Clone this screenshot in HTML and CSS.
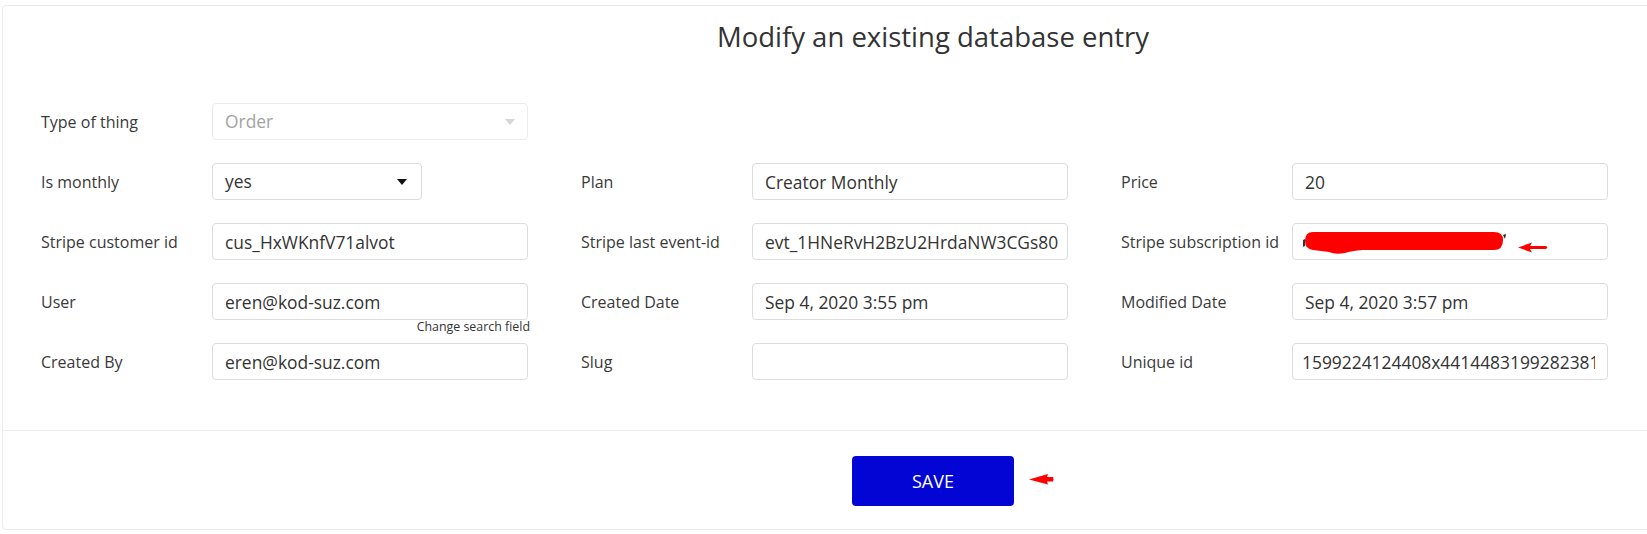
FILE: index.html
```html
<!DOCTYPE html>
<html lang="en">
<head>
  <meta charset="UTF-8">
  <title>Modify an existing database entry</title>
  <link rel="stylesheet" href="styles.css">
</head>
<body>
  <!-- Modal: edit a thing in the database -->
  <div class="modal">
    <div class="modal-head">
      <h1 class="modal-title">Modify an existing database entry</h1>
    </div>

    <div class="modal-body">
      <div class="form-row">
        <div class="field">
          <label class="field-label">Type of thing</label>
          <div class="select select-disabled">Order<span class="caret"></span></div>
        </div>
      </div>

      <div class="form-row">
        <div class="field">
          <label class="field-label">Is monthly</label>
          <div class="select select-small">yes<span class="caret"></span></div>
        </div>
        <div class="field">
          <label class="field-label">Plan</label>
          <input class="text-input" type="text" value="Creator Monthly">
        </div>
        <div class="field">
          <label class="field-label">Price</label>
          <input class="text-input" type="text" value="20">
        </div>
      </div>

      <div class="form-row">
        <div class="field">
          <label class="field-label">Stripe customer id</label>
          <input class="text-input" type="text" value="cus_HxWKnfV71alvot">
        </div>
        <div class="field">
          <label class="field-label">Stripe last event-id</label>
          <input class="text-input input-tight" type="text" value="evt_1HNeRvH2BzU2HrdaNW3CGs80">
        </div>
        <div class="field">
          <label class="field-label">Stripe subscription id</label>
          <div class="input-wrap">
            <input class="text-input" type="text" value="">
            <!-- redacted value + pointer drawn over the screenshot -->
            <svg class="scribble" width="206" height="24" viewBox="0 0 206 24">
              <path d="M2 9 L4 8 L4 15 L2 16 Z" fill="#333"/>
              <path d="M202 4 L205 3 L204 8 Z" fill="#222"/>
              <path d="M12 1 H193 Q202 1 202 9 Q202 19 193 19 H62 Q50 20 44 22 Q34 24 28 21 Q20 20 12 19 Q4 18 4 10 Q4 1 12 1 Z" fill="#ff0000"/>
            </svg>
            <svg class="pointer pointer-sub" width="30" height="11" viewBox="0 0 30 11">
              <polygon points="0,5.5 14,0.5 12,4 28,4 29.5,5.5 28,7 12,7 14,10.5" fill="#ff0000"/>
            </svg>
          </div>
        </div>
      </div>

      <div class="form-row">
        <div class="field">
          <label class="field-label">User</label>
          <div class="input-wrap">
            <input class="text-input" type="text" value="eren@kod-suz.com">
            <span class="search-link">Change search field</span>
          </div>
        </div>
        <div class="field">
          <label class="field-label">Created Date</label>
          <input class="text-input" type="text" value="Sep 4, 2020 3:55 pm">
        </div>
        <div class="field">
          <label class="field-label">Modified Date</label>
          <input class="text-input" type="text" value="Sep 4, 2020 3:57 pm">
        </div>
      </div>

      <div class="form-row">
        <div class="field">
          <label class="field-label">Created By</label>
          <input class="text-input" type="text" value="eren@kod-suz.com">
        </div>
        <div class="field">
          <label class="field-label">Slug</label>
          <input class="text-input" type="text" value="">
        </div>
        <div class="field">
          <label class="field-label">Unique id</label>
          <input class="text-input input-scrolled" type="text" value="1599224124408x441448319928238128">
        </div>
      </div>
    </div>

    <div class="modal-foot">
      <div class="save-wrap">
        <button class="save-btn" type="button">SAVE</button>
        <svg class="pointer pointer-save" width="25" height="12" viewBox="0 0 25 12">
          <polygon points="0,6.5 19,1 18,4 24,4 24.5,6 24,8.5 18,8.5 19,11.5" fill="#ff0000"/>
        </svg>
      </div>
    </div>
  </div>
</body>
</html>
```

FILE: styles.css
```css
* {
  box-sizing: border-box;
}

body {
  margin: 0;
  width: 1647px;
  height: 534px;
  overflow: hidden;
  background: #fff;
  color: #333;
  font-family: "Open Sans", "Liberation Sans", sans-serif;
}

/* Modal box, wider than the window */
.modal {
  width: 1862px;
  margin: 5px 0 0 2px;
  border: 1px solid #ececec;
  border-radius: 4px;
  background: #fff;
}

.modal-head {
  padding-top: 12px;
  text-align: center;
}

.modal-title {
  margin: 0;
  font-size: 27.5px;
  font-weight: 400;
  line-height: 38px;
  color: #333;
}

.modal-body {
  padding: 47px 0 50px 38px;
}

/* Rows of three label/input pairs */
.form-row {
  display: grid;
  grid-template-columns: repeat(3, 540px);
  height: 37px;
  margin-bottom: 23px;
}

.form-row:last-child {
  margin-bottom: 0;
}

.field {
  display: flex;
  align-items: center;
}

.field-label {
  width: 171px;
  flex-shrink: 0;
  font-size: 16px;
  color: #3a3a3a;
}

.text-input,
.select {
  width: 316px;
  height: 37px;
  padding: 0 12px;
  border: 1px solid #dcdcdc;
  border-radius: 4px;
  background: #fff;
  font-family: inherit;
  font-size: 17.4px;
  line-height: 35px;
  color: #333;
  outline: none;
}

.input-scrolled {
  padding-left: 9px;
}

.input-tight {
  padding-right: 2px;
}

.input-wrap {
  position: relative;
  width: 316px;
  height: 37px;
}

/* Dropdowns */
.select {
  position: relative;
  white-space: nowrap;
}

.select-small {
  width: 210px;
}

.select-disabled {
  border-color: #ebebeb;
  color: #a3a3a3;
}

.caret {
  position: absolute;
  right: 14px;
  top: 15px;
  width: 0;
  height: 0;
  border-style: solid;
  border-width: 6px 5px 0 5px;
  border-color: #111 transparent transparent transparent;
}

.select-disabled .caret {
  right: 12px;
  border-color: #d4d6da transparent transparent transparent;
}

.search-link {
  position: absolute;
  right: -2px;
  top: 37px;
  font-size: 12.4px;
  line-height: 14px;
  color: #333;
  white-space: nowrap;
}

/* Red marks drawn over the screenshot */
.scribble {
  position: absolute;
  left: 9px;
  top: 8px;
}

.pointer {
  position: absolute;
}

.pointer-sub {
  left: 226px;
  top: 19px;
}

/* Footer with save button */
.modal-foot {
  display: flex;
  justify-content: center;
  padding: 25px 0 23px;
  border-top: 1px solid #ededed;
}

.save-wrap {
  position: relative;
}

.save-btn {
  display: block;
  width: 162px;
  height: 50px;
  border: none;
  border-radius: 4px;
  background: #0205d3;
  color: #fff;
  font-family: inherit;
  font-size: 18px;
  cursor: pointer;
}

.pointer-save {
  left: calc(100% + 15px);
  top: 17px;
}
```
